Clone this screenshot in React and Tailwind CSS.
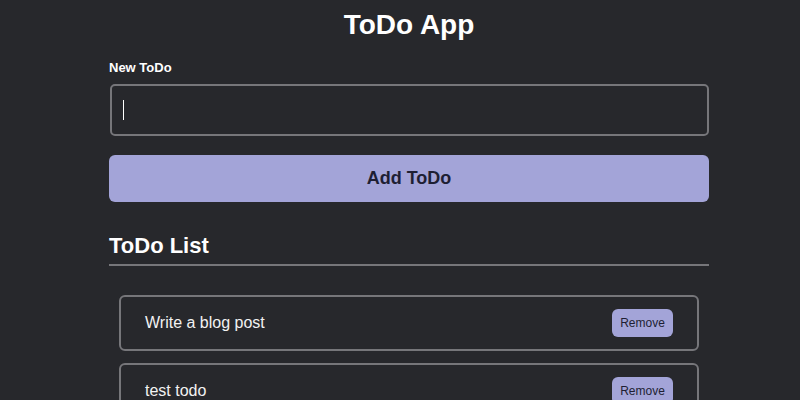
import React, { useState } from "react";

const initialTodos = ["Write a blog post", "test todo"];

const TodoItem = ({ text, onRemove }) => (
  <li className="flex h-[56px] items-center justify-between rounded-[6px] border-2 border-[#76767a] pl-[24px] pr-[24px]">
    <span className="text-[16px] text-[#f2f2f2]">{text}</span>
    <button
      onClick={onRemove}
      className="h-[28px] w-[61px] rounded-[6px] bg-[#a3a4d8] text-[12px] font-medium text-[#1e1f33]"
    >
      Remove
    </button>
  </li>
);

export default function App() {
  const [todos, setTodos] = useState(initialTodos);
  const [value, setValue] = useState("");

  const addTodo = () => {
    if (!value.trim()) return;
    setTodos((prev) => [...prev, value.trim()]);
    setValue("");
  };

  return (
    <div
      className="min-h-screen w-full bg-[#27282c] text-white"
      style={{ fontFamily: '"Liberation Sans", Arial, sans-serif' }}
    >
      <div className="flex justify-center pl-[18px]">
        <div className="w-[600px] pt-[9px]">
          <h1 className="text-center text-[28px] font-bold leading-[32px]">ToDo App</h1>

          <label className="mt-[19px] block text-[13px] font-bold leading-[16px]">New ToDo</label>
          <div className="relative mt-[8px] ml-px w-[599px]">
            <input
              value={value}
              onChange={(e) => setValue(e.target.value)}
              className="h-[52px] w-full rounded-[5px] border-2 border-[#76767a] bg-transparent px-[12px] text-[16px] text-white caret-transparent outline-none"
            />
            {!value && (
              <span className="pointer-events-none absolute left-[13px] top-[16px] h-[20px] w-px bg-white" />
            )}
          </div>

          <button
            onClick={addTodo}
            className="mt-[19px] h-[47px] w-full rounded-[6px] bg-[#a3a4d8] text-[18px] font-bold text-[#1e1f33]"
          >
            Add ToDo
          </button>

          <h2 className="mt-[31px] text-[22px] font-bold leading-[26px]">ToDo List</h2>
          <div className="mt-[5px] h-[2px] w-full bg-[#76767a]" />

          <ul className="mt-[29px] flex flex-col gap-[12px] px-[10px] pb-[20px]">
            {todos.map((t, i) => (
              <TodoItem
                key={i}
                text={t}
                onRemove={() => setTodos((prev) => prev.filter((_, j) => j !== i))}
              />
            ))}
          </ul>
        </div>
      </div>
    </div>
  );
}
